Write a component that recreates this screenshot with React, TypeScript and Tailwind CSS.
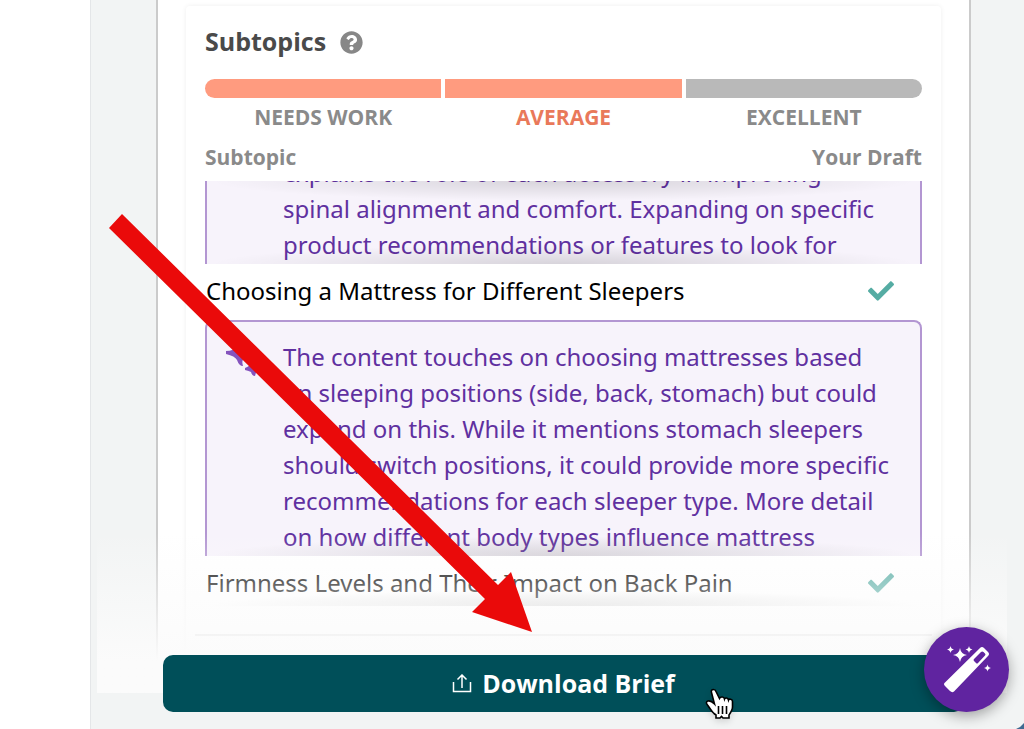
import React from 'react';
import { FaCheck, FaQuestionCircle } from 'react-icons/fa';

interface TopicRowProps {
  title: string;
}

const levels = [
  { label: 'NEEDS WORK', bar: 'bg-[#ff9b7f] rounded-l-full', text: 'text-[#8a8a8a]' },
  { label: 'AVERAGE', bar: 'bg-[#ff9b7f]', text: 'text-[#e9795a]' },
  { label: 'EXCELLENT', bar: 'bg-[#b9b9b9] rounded-r-full', text: 'text-[#8a8a8a]' },
];

const firstTip = [
  'explains the role of each accessory in improving',
  'spinal alignment and comfort. Expanding on specific',
  'product recommendations or features to look for',
];

const secondTip = [
  'The content touches on choosing mattresses based',
  'on sleeping positions (side, back, stomach) but could',
  'expand on this. While it mentions stomach sleepers',
  'should switch positions, it could provide more specific',
  'recommendations for each sleeper type. More detail',
  'on how different body types influence mattress',
];

const TopicRow: React.FC<TopicRowProps> = ({ title }) => (
  <div className="flex items-center justify-between pr-7 pl-px">
    <span>{title}</span>
    <FaCheck className="h-[26px] w-[26px] text-[#55aca3]" aria-label="Covered" />
  </div>
);

const TipText: React.FC<{ lines: string[] }> = ({ lines }) => (
  <p className="pl-[76px] leading-9 whitespace-nowrap text-[#6030a0]">
    {lines.map((line) => (
      <span key={line} className="block">{line}</span>
    ))}
  </p>
);

const Sparkles = () => (
  <svg className="absolute left-[18px] top-6 h-9 w-9" viewBox="0 0 36 36" fill="#8553bd" aria-hidden="true">
    <path d="M1 5 Q11 5 14-3 Q17 5 27 5 Q27 8 20 10 Q16 13 18 20 Q14 20 12 14 Q10 10 1 8 Z" />
    <path d="M20 22 Q26 20 27 15 Q30 20 36 22 Q31 24 30 30 Q27 30 26 26 Q24 25 20 24 Z" />
  </svg>
);

const WandIcon = () => (
  <svg className="h-12 w-12" viewBox="0 0 48 48" fill="white" aria-hidden="true">
    <path
      fillRule="evenodd"
      d="M37 2 Q39 0 41 2 L45 6 Q47 8 45 10 L11 45.500 Q9 47 7 45 L2 40 Q0 38 2 36.500 Z M38 6 L31 13 Q30 14 31 15 L33 17 Q34 18 35 17 L42 9.500 Q43 8.500 42 7.500 L40.500 6 Q39.300 5 38 6 Z"
    />
    <path d="M17 2 Q17.800 8 24 9 Q17.800 10 17 16 Q16.200 10 10 9 Q16.200 8 17 2 Z" />
    <path d="M7.500 0 Q8 3 11 3.500 Q8 4 7.500 7 Q7 4 4 3.500 Q7 3 7.500 0 Z" />
    <path d="M26 0 Q26.500 3 29.500 3.500 Q26.500 4 26 7 Q25.500 4 22.500 3.500 Q25.500 3 26 0 Z" />
    <path d="M44.500 18.500 Q45 21.500 48 22 Q45 22.500 44.500 25.500 Q44 22.500 41 22 Q44 21.500 44.500 18.500 Z" />
  </svg>
);

const UploadIcon = () => (
  <svg className="h-5 w-5" viewBox="0 0 20 20" fill="none" stroke="white" strokeWidth="1.500" aria-hidden="true">
    <path d="M1.500 8 V17.500 H18.500 V8 M10 14 V1.500 M5.500 5.500 L10 1 L14.500 5.500" />
  </svg>
);

const HandCursor = () => (
  <svg className="absolute left-[704px] top-[688px] h-8 w-[30px] drop-shadow-md" viewBox="0 0 30 32" aria-hidden="true">
    <path
      d="M9.500 1.500 C7.500 1.500 7 3 7.500 4.500 L10.500 16 C8.500 14 6 12.500 4 13 C2 13.500 2 15.500 3.500 17 C6 20 7 23 10 25.500 L12 27 V30 H16 L17.500 28.500 L19 30 H25 V27 C27 24 28.500 22 28.500 19 V13.500 C28.500 11 25 10.500 24.500 12 C24 9.500 21 9.500 20.500 11 C20 8.500 16.500 8.500 15.500 10.500 L12 3.500 C11.500 2 10.500 1.500 9.500 1.500 Z"
      fill="white"
      stroke="black"
      strokeWidth="1.600"
    />
    <path d="M14.500 18 V26 M18.500 18 V26 M22.500 18 V26" stroke="black" strokeWidth="1.600" />
  </svg>
);

const App: React.FC = () => {
  return (
    <div className="relative flex h-screen overflow-hidden bg-white font-['Noto_Sans',sans-serif] text-2xl text-black">
      <aside className="w-[90px] shrink-0" />

      <main className="relative flex-1 border-l border-[#e4e6e8] bg-[#f2f4f4] pl-[65px] pr-[53px]">
        <section className="h-full border-x-2 border-[#cbcbcb] bg-white px-7 pt-1.5">
          <div className="h-full rounded-sm px-[19px] pt-4 shadow-[0_0_5px_rgba(0,0,0,0.07)]">
            <div className="flex h-10 items-center gap-3.5 font-['Open_Sans',sans-serif]">
              <h2 className="text-[25px] font-bold text-[#4a4a4a]">Subtopics</h2>
              <button aria-label="About subtopics">
                <FaQuestionCircle className="h-[23px] w-[23px] text-[#878787]" />
              </button>
            </div>

            <div className="mt-[17px] grid grid-cols-3 gap-1 font-['Open_Sans',sans-serif]">
              {levels.map((level) => (
                <div key={level.label} className="text-center">
                  <div className={`h-[19px] ${level.bar}`} />
                  <div className={`mt-[3px] text-[21px] leading-8 font-bold ${level.text}`}>{level.label}</div>
                </div>
              ))}
            </div>

            <div className="mt-2 flex justify-between font-['Open_Sans',sans-serif] text-[21px] leading-8 font-bold text-[#8a8a8a]">
              <span>Subtopic</span>
              <span>Your Draft</span>
            </div>

            {/* Topic list, scrolled part way down */}
            <div className="mt-2">
              <div className="relative flex h-[83px] flex-col justify-end overflow-hidden border-x-2 border-[#b396d2] bg-[#f7f3fb] pb-px">
                <TipText lines={firstTip} />
                <div className="absolute inset-x-0 top-0 h-5 bg-[radial-gradient(ellipse_at_top,rgba(0,0,0,0.13),transparent_70%)]" />
                <div className="absolute inset-x-0 bottom-0 h-5 bg-[radial-gradient(ellipse_at_bottom,rgba(0,0,0,0.13),transparent_70%)]" />
              </div>
              <div className="flex h-14 flex-col justify-center pb-0.5">
                <TopicRow title="Choosing a Mattress for Different Sleepers" />
              </div>
              <div className="relative h-[236px] overflow-hidden rounded-t-lg border-x-2 border-t-2 border-[#b396d2] bg-[#f7f3fb] pt-[17px]">
                <Sparkles />
                <TipText lines={secondTip} />
                <div className="absolute inset-x-0 bottom-0 h-5 bg-[radial-gradient(ellipse_at_bottom,rgba(0,0,0,0.15),transparent_70%)]" />
              </div>
              <div className="relative flex h-[50px] flex-col justify-center pt-1">
                <TopicRow title="Firmness Levels and Their Impact on Back Pain" />
                <div className="absolute inset-x-0 bottom-0 h-4 bg-[radial-gradient(ellipse_at_bottom,rgba(0,0,0,0.15),transparent_70%)]" />
              </div>
            </div>
            <hr className="-mx-2.5 mt-7 border-t-2 border-[#d8d8d8]" />
          </div>
        </section>

        {/* Sticky footer with its fade */}
        <div className="absolute inset-x-0 bottom-0">
          <div className="mr-[17px] ml-1.5 h-40 bg-linear-to-b from-[#fbfbfb]/0 to-[#fbfbfb] to-80%" />
          <div className="h-9 bg-[#f2f4f4]" />
        </div>
        <button className="absolute bottom-[17px] left-[72px] right-[60px] flex h-[57px] items-center justify-center gap-2.5 rounded-[10px] bg-[#004f59] font-['Open_Sans',sans-serif] text-[25px] font-bold text-white">
          <UploadIcon />
          Download Brief
        </button>
        <button
          className="absolute right-[15px] bottom-[17px] flex h-[85px] w-[85px] items-center justify-center rounded-full bg-[#6024a0] shadow-[0_4px_14px_rgba(0,0,0,0.35)]"
          aria-label="Writing assistant"
        >
          <WandIcon />
        </button>
      </main>

      <svg className="pointer-events-none absolute left-[108px] top-[214px] h-[420px] w-[426px]" viewBox="0 0 426 420" aria-hidden="true">
        <path d="M14 0 L390 371 L403 358 L424 418 L364 398 L377 385 L1 14 Z" fill="#ea0a0a" />
      </svg>
      <HandCursor />
      <svg className="absolute right-0 bottom-0 h-1.5 w-2" viewBox="0 0 8 6" aria-hidden="true">
        <path d="M8 0 Q5 4 0 6 H8 Z" fill="#3f6a91" />
      </svg>
    </div>
  );
};

export default App;
